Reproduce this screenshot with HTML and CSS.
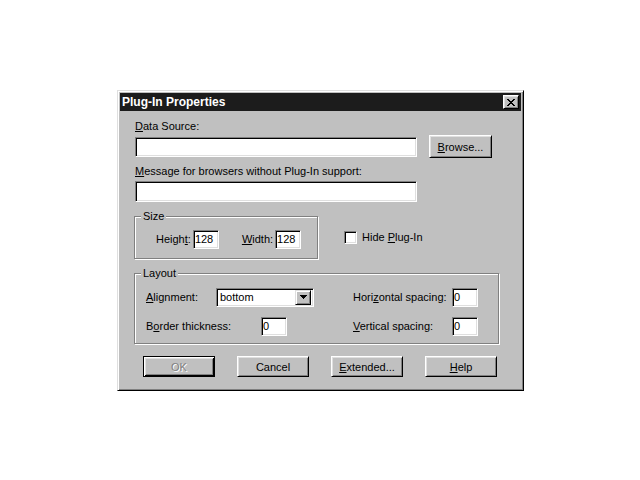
FILE: index.html
```html
<!DOCTYPE html>
<html lang="en">
<head>
    <meta charset="UTF-8">
    <title>Plug-In Properties</title>
    <link rel="stylesheet" href="styles.css">
</head>
<body>

    <div class="dialog">
        <div class="titlebar">
            <span class="title">Plug-In Properties</span>
            <button class="close" type="button">
                <svg width="8" height="7" viewBox="0 0 8 7" shape-rendering="crispEdges">
                    <path fill="#000" d="M0 0h2v1H0z M6 0h2v1H6z M1 1h2v1H1z M5 1h2v1H5z M2 2h4v1H2z M3 3h2v1H3z M2 4h4v1H2z M1 5h2v1H1z M5 5h2v1H5z M0 6h2v1H0z M6 6h2v1H6z"/>
                </svg>
            </button>
        </div>

        <div class="content">
            <div class="label"><u>D</u>ata Source:</div>
            <div class="source-row">
                <input type="text" class="field wide">
                <button class="btn browse" type="button"><u>B</u>rowse...</button>
            </div>

            <div class="label msg-label"><u>M</u>essage for browsers without Plug-In support:</div>
            <input type="text" class="field wide msg">

            <div class="size-row">
                <div class="group size">
                    <div class="caption">Size</div>
                    <div class="size-fields">
                        <span>Heigh<u>t</u>:</span>
                        <input type="text" class="field small" value="128">
                        <span class="width-label"><u>W</u>idth:</span>
                        <input type="text" class="field small" value="128">
                    </div>
                </div>
                <label class="check"><span class="box"></span><span>Hide <u>P</u>lug-In</span></label>
            </div>

            <div class="group layout">
                <div class="caption">Layout</div>
                <div class="layout-grid">
                    <span class="c1"><u>A</u>lignment:</span>
                    <div class="combo">
                        <span class="combo-text">bottom</span>
                        <span class="combo-btn">
                            <svg width="7" height="4" viewBox="0 0 7 4" shape-rendering="crispEdges">
                                <path fill="#000" d="M0 0h7v1H0z M1 1h5v1H1z M2 2h3v1H2z M3 3h1v1H3z"/>
                            </svg>
                        </span>
                    </div>
                    <span class="c6">Hori<u>z</u>ontal spacing:</span>
                    <input type="text" class="field small c7" value="0">

                    <span class="c12">B<u>o</u>rder thickness:</span>
                    <input type="text" class="field small c3" value="0">
                    <span class="c6"><u>V</u>ertical spacing:</span>
                    <input type="text" class="field small c7" value="0">
                </div>
            </div>

            <div class="buttons">
                <button class="btn default" type="button" disabled>OK</button>
                <button class="btn" type="button">Cancel</button>
                <button class="btn" type="button"><u>E</u>xtended...</button>
                <button class="btn" type="button"><u>H</u>elp</button>
            </div>
        </div>
    </div>

</body>
</html>
```

FILE: styles.css
```css
* {
    box-sizing: border-box;
}
body {
    margin: 0;
    background-color: #fff;
    font-family: "Liberation Sans", Arial, sans-serif;
    font-size: 11px;
    color: #000;
}
u {
    text-decoration-thickness: 1px;
    text-underline-offset: 1px;
}

/* window frame */
.dialog {
    width: 407px;
    height: 301px;
    margin: 90px 0 0 117px;
    padding: 2px;
    background-color: #c0c0c0;
    border: 1px solid;
    border-color: #dfdfdf #000 #000 #dfdfdf;
    box-shadow: inset 1px 1px #fff, inset -1px -1px #808080;
}
.titlebar {
    height: 18px;
    display: flex;
    align-items: center;
    justify-content: space-between;
    padding: 0 2px;
    background-color: #1c1c1c;
    color: #fff;
}
.title {
    font-weight: bold;
    font-size: 12px;
}
.close {
    width: 16px;
    height: 14px;
    padding: 0;
    display: flex;
    align-items: center;
    justify-content: center;
    background-color: #c0c0c0;
    border: 1px solid;
    border-color: #fff #000 #000 #fff;
    box-shadow: inset 1px 1px #dfdfdf, inset -1px -1px #808080;
}

.content {
    padding: 9px 0 0 15px;
}
.label {
    line-height: 13px;
    height: 13px;
}
.msg-label {
    margin-top: 7px;
}

/* sunken edit fields */
.field {
    display: block;
    height: 20px;
    margin: 0;
    padding: 0 1px;
    font: inherit;
    color: #000;
    background-color: #fff;
    border: 1px solid;
    border-color: #808080 #fff #fff #808080;
    box-shadow: inset 1px 1px #000, inset -1px -1px #dfdfdf;
    outline: none;
}
.field.wide {
    width: 282px;
}
.field.msg {
    height: 21px;
    margin-top: 3px;
}
.field.small {
    width: 26px;
    height: 19px;
}

/* push buttons */
.btn {
    width: 72px;
    height: 21px;
    padding: 0;
    font: inherit;
    color: #000;
    background-color: #c0c0c0;
    border: 1px solid;
    border-color: #fff #000 #000 #fff;
    box-shadow: inset 1px 1px #dfdfdf, inset -1px -1px #808080;
}
.btn.default {
    border-color: #000;
    box-shadow: inset 1px 1px #fff, inset -1px -1px #000, inset 2px 2px #dfdfdf, inset -2px -2px #808080;
}
.btn:disabled {
    color: #808080;
    text-shadow: 1px 1px #fff;
}

.source-row {
    display: flex;
    align-items: center;
    margin-top: 2px;
}
.browse {
    width: 63px;
    height: 23px;
    margin-left: 12px;
}

/* group boxes */
.group {
    border: 1px solid #808080;
    box-shadow: inset 1px 1px #fff, 1px 1px #fff;
    margin-left: -1px;
}
.caption {
    width: fit-content;
    line-height: 13px;
    margin: -7px 0 0 6px;
    padding: 0 2px;
    background-color: #c0c0c0;
}

.size-row {
    display: flex;
    align-items: flex-start;
    margin-top: 14px;
}
.size {
    width: 184px;
    padding-bottom: 9px;
}
.size-fields {
    display: flex;
    align-items: center;
    height: 20px;
    margin-top: 6px;
    padding-left: 21px;
}
.size-fields .field {
    margin-left: 2px;
}
.width-label {
    margin-left: 23px;
}

.check {
    display: flex;
    align-items: center;
    margin: 15px 0 0 26px;
    line-height: 13px;
}
.box {
    width: 13px;
    height: 13px;
    margin-right: 5px;
    background-color: #fff;
    border: 1px solid;
    border-color: #808080 #fff #fff #808080;
    box-shadow: inset 1px 1px #000, inset -1px -1px #dfdfdf;
}

.layout {
    width: 365px;
    margin-top: 14px;
    padding-bottom: 7px;
}
.layout-grid {
    display: grid;
    grid-template-columns: 70px 45px 26px 27px 39px 99px 26px;
    grid-auto-rows: 20px;
    row-gap: 9px;
    align-items: center;
    margin-top: 7px;
    padding-left: 11px;
}
.c1 { grid-column: 1; }
.c12 { grid-column: 1 / 3; }
.c3 { grid-column: 3; }
.c6 { grid-column: 6; }
.c7 { grid-column: 7; }

.combo {
    grid-column: 2 / 5;
    height: 19px;
    display: flex;
    align-items: center;
    justify-content: space-between;
    padding: 2px 2px 2px 3px;
    background-color: #fff;
    border: 1px solid;
    border-color: #808080 #fff #fff #808080;
    box-shadow: inset 1px 1px #000, inset -1px -1px #dfdfdf;
}
.combo-btn {
    width: 16px;
    height: 15px;
    display: flex;
    align-items: center;
    justify-content: center;
    background-color: #c0c0c0;
    border: 1px solid;
    border-color: #dfdfdf #000 #000 #dfdfdf;
    box-shadow: inset 1px 1px #fff, inset -1px -1px #808080;
}

.buttons {
    display: flex;
    gap: 22px;
    margin-top: 12px;
    padding-left: 8px;
}
```
